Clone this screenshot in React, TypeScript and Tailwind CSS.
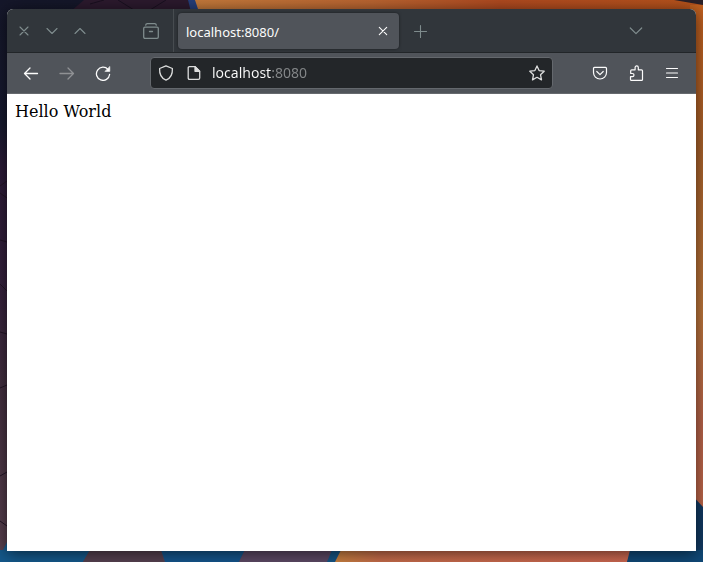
import type { ReactNode } from 'react';

function Icon({ children, width = 1.3 }: { children: ReactNode; width?: number }) {
  return (
    <svg
      viewBox="0 0 16 16"
      className="size-4 shrink-0"
      fill="none"
      stroke="currentColor"
      strokeWidth={width}
      strokeLinecap="round"
      strokeLinejoin="round"
      aria-hidden="true"
    >
      {children}
    </svg>
  );
}

function TitleButton({ label, children }: { label: string; children: ReactNode }) {
  return (
    <button type="button" aria-label={label} className="flex h-8 w-7 items-center justify-center text-[#7f8c8d]">
      {children}
    </button>
  );
}

function ToolButton({ label, disabled, children }: { label: string; disabled?: boolean; children: ReactNode }) {
  return (
    <button
      type="button"
      aria-label={label}
      disabled={disabled}
      className="flex h-8 w-9 items-center justify-center text-[#fcfcfc] disabled:text-[#8f9194]"
    >
      {children}
    </button>
  );
}

function Wallpaper() {
  return (
    <svg
      viewBox="0 0 703 562"
      preserveAspectRatio="none"
      className="absolute inset-0 -z-10 size-full"
      aria-hidden="true"
    >
      <defs>
        <linearGradient id="left" x1="0" y1="0" x2="0" y2="1">
          <stop offset="0" stopColor="#15172a" />
          <stop offset="0.22" stopColor="#171a30" />
          <stop offset="0.3" stopColor="#2c1b38" />
          <stop offset="0.5" stopColor="#35213d" />
          <stop offset="0.7" stopColor="#443040" />
          <stop offset="1" stopColor="#5b4250" />
        </linearGradient>
        <linearGradient id="top" x1="0" y1="0" x2="1" y2="0">
          <stop offset="0" stopColor="#c57a3b" />
          <stop offset="0.35" stopColor="#bb6531" />
          <stop offset="0.6" stopColor="#b04a20" />
          <stop offset="1" stopColor="#b8541c" />
        </linearGradient>
        <linearGradient id="right" x1="0" y1="0" x2="0" y2="1">
          <stop offset="0" stopColor="#c2601f" />
          <stop offset="0.25" stopColor="#aa622b" />
          <stop offset="0.55" stopColor="#bd763b" />
          <stop offset="0.75" stopColor="#b9644a" />
          <stop offset="1" stopColor="#c4694a" />
        </linearGradient>
        <linearGradient id="bottom" x1="0" y1="0" x2="1" y2="0">
          <stop offset="0" stopColor="#c8813f" />
          <stop offset="0.15" stopColor="#c56b4a" />
          <stop offset="1" stopColor="#cb6750" />
        </linearGradient>
      </defs>
      <rect width="703" height="562" fill="url(#left)" />
      <path d="M84 0H188L192 12H70Z" fill="#2c1a2e" />
      <path d="M90 4L104 0M118 0L134 10M150 10L166 0" stroke="#1a1020" />
      <path d="M188 0H196L200 12H191Z" fill="#263f7a" />
      <path d="M195 0H703V12H199Z" fill="url(#top)" />
      <path d="M674 0H703V5Z" fill="#2b2129" />
      <path d="M690 5H703V562H690Z" fill="url(#right)" />
      <path d="M690 493L703 507V562H690Z" fill="#123a63" />
      <path d="M0 556L8 540V562H0Z" fill="#175a8c" />
      <path d="M0 550H90L83 562H0Z" fill="#14588a" />
      <path d="M90 550H161L164 562H83Z" fill="#55404f" />
      <path d="M161 550H245L239 562H165Z" fill="#14548a" />
      <path d="M245 550H334L329 562H239Z" fill="#5b4863" />
      <path d="M332 550H342L336 562H327Z" fill="#155585" />
      <path d="M341 550H632L627 562H335Z" fill="url(#bottom)" />
      <path d="M630 550H703V562H627Z" fill="#104876" />
      <path d="M0 186L7 181M0 193L7 198M0 240L7 242M0 284L7 291M0 332L7 334M0 388L7 385M0 476L7 472M0 521L7 526" stroke="#231526" />
    </svg>
  );
}

export default function App() {
  return (
    <div className="relative isolate flex min-h-screen flex-col overflow-hidden px-[7px] pt-[9px] pb-[11px] font-['Noto_Sans',sans-serif]">
      <Wallpaper />
      <div className="flex flex-1 flex-col overflow-hidden rounded-t-md bg-white shadow-[0_2px_16px_rgba(0,0,0,0.6)]">
        <header>
          <div className="flex h-11 items-center border-b border-[#222629] bg-[#31363b] pl-[3px]">
            <TitleButton label="Close window">
              <Icon width={1.1}><path d="M4 4l8 8M12 4l-8 8" /></Icon>
            </TitleButton>
            <TitleButton label="Minimize">
              <Icon width={1.1}><path d="M3 5.5l5 5 5-5" /></Icon>
            </TitleButton>
            <TitleButton label="Maximize">
              <Icon width={1.1}><path d="M3 10.5l5-5 5 5" /></Icon>
            </TitleButton>
            <div className="ml-[43px] flex h-full items-center border-r border-[#474c50] pr-2">
              <TitleButton label="Recent tabs">
                <Icon>
                  <path d="M2.7 2.2q.2-1.5 1.6-1.5h7.4q1.4 0 1.6 1.5" />
                  <rect x="0.7" y="4.2" width="14.6" height="11.1" rx="1.3" />
                  <path d="M6.5 8.5h3" />
                </Icon>
              </TitleButton>
            </div>
            <div className="ml-1 flex h-9 w-[221px] items-center rounded bg-[#50545a] px-2 text-[#fcfcfc] shadow-[0_0_3px_rgba(0,0,0,0.5)]">
              <span className="flex-1 pt-0.5 text-[13px] leading-5">localhost:8080/</span>
              <button type="button" aria-label="Close tab">
                <Icon width={1.1}><path d="M4.3 4.3l7.4 7.4M11.7 4.3l-7.4 7.4" /></Icon>
              </button>
            </div>
            <button type="button" aria-label="New tab" className="ml-1 flex h-8 w-9 items-center justify-center text-[#7f8c8d]">
              <Icon width={1.1}><path d="M7.5 2.500v12M1.500 8.500h12" /></Icon>
            </button>
            <button type="button" aria-label="List all tabs" className="mr-[42px] ml-auto flex h-8 w-9 items-center justify-center text-[#7f8c8d]">
              <Icon width={1.2}><path d="M2.300 5l5.700 5.700L13.700 5" /></Icon>
            </button>
          </div>
          <div className="flex h-[41px] items-center border-b border-[#66696e] bg-[#50545a] px-1.5">
            <ToolButton label="Back">
              <Icon><path d="M14.500 8.500H1.500M7 3L1.500 8.500 7 14" /></Icon>
            </ToolButton>
            <ToolButton label="Forward" disabled>
              <Icon><path d="M1 8.500h13.500M9 3l5.500 5.500L9 14" /></Icon>
            </ToolButton>
            <ToolButton label="Reload">
              <Icon>
                <path d="M13 4.400A6.600 6.600 0 1 0 14.600 9.500" />
                <path d="M14.800 1.800v4.600h-4.600z" fill="currentColor" strokeWidth="0.600" />
              </Icon>
            </ToolButton>
            <div className="mx-[29px] flex h-8 min-w-0 flex-1 items-center rounded border border-[#64686d] bg-[#232629] px-[7px] text-[#dcdddd]">
              <button type="button" aria-label="Tracking protection">
                <Icon><path d="M8 .8l6.400 2.700c.300 5.500-1.800 9.800-6.400 11.700C3.400 13.300 1.300 9 1.600 3.500z" /></Icon>
              </button>
              <button type="button" aria-label="Site information" className="ml-3">
                <Icon>
                  <path d="M3.500 1.600h5.700l4.500 4.500v7q0 1.300-1.300 1.300H3.500q-1.300 0-1.300-1.300V2.900q0-1.300 1.300-1.300z" />
                  <path d="M9 1.800v4.500h4.500z" fill="currentColor" />
                </Icon>
              </button>
              <input
                type="text"
                aria-label="Address"
                defaultValue="localhost:8080"
                className="ml-2.5 min-w-0 flex-1 bg-[linear-gradient(to_right,#fcfcfc_59px,#85888a_59px)] bg-clip-text text-sm leading-5 text-transparent caret-white outline-none"
              />
              <button type="button" aria-label="Bookmark this page">
                <Icon><path d="M8 .9l2.100 4.700 5.100.6-3.700 3.500 1 5.200L8 12.300l-4.500 2.600 1-5.200L.8 6.200l5.100-.6z" /></Icon>
              </button>
            </div>
            <ToolButton label="Save to Pocket">
              <Icon width={1.2}>
                <path d="M2.500 2.400h11q1 0 1 1v4.100a6.500 6.500 0 0 1-13 0V3.400q0-1 1-1z" />
                <path d="M4.800 6.500L8 9.600l3.200-3.100" />
              </Icon>
            </ToolButton>
            <ToolButton label="Extensions">
              <Icon width={1.2}>
                <path d="M3.500 15.400h10q1 0 1-1V5.800q0-1-1-1h-3.200V2.500a1.600 1.600 0 0 0-3.200 0v2.300H3.700q-1 0-1 1v2.700h1.700a1.600 1.600 0 0 1 0 3.200H2.500v2.700q0 1 1 1z" />
              </Icon>
            </ToolButton>
            <ToolButton label="Open application menu">
              <Icon width={1.2}><path d="M2.500 3.500h11M2.500 8h11M2.500 12.500h11" /></Icon>
            </ToolButton>
          </div>
        </header>
        <main className="flex-1 bg-white p-2 font-['DejaVu_Serif',serif] text-base leading-[19px] text-black">
          Hello World
        </main>
      </div>
    </div>
  );
}
